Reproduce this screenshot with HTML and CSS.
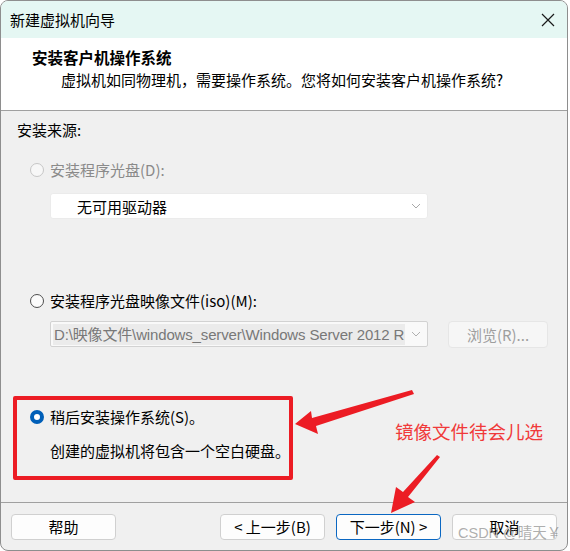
FILE: index.html
```html
<!DOCTYPE html>
<html lang="zh-CN">
<head>
<meta charset="utf-8">
<title>新建虚拟机向导</title>
<link rel="stylesheet" href="styles.css">
</head>
<body>
<div class="page">
  <div class="window">
    <div class="titlebar">
      <span class="title">新建虚拟机向导</span>
      <svg class="close" viewBox="0 0 14 14" width="14" height="14"><path d="M1 1 L13 13 M13 1 L1 13" stroke="#1a1a1a" stroke-width="1.2" fill="none"/></svg>
    </div>
    <div class="header">
      <div class="h-title">安装客户机操作系统</div>
      <div class="h-sub">虚拟机如同物理机，需要操作系统。您将如何安装客户机操作系统?</div>
    </div>
    <div class="content">
      <div class="label">安装来源:</div>
      <div class="radio-row r1"><span class="radio"></span><span>安装程序光盘(D):</span></div>
      <div class="select">
        <span>无可用驱动器</span>
        <svg class="chev" viewBox="0 0 10 6" width="10" height="6"><path d="M1 1 L5 5 L9 1" stroke="#a8a8a8" stroke-width="1" fill="none"/></svg>
      </div>
      <div class="radio-row r2"><span class="radio"></span><span>安装程序光盘映像文件(iso)(M):</span></div>
      <div class="iso-row">
        <div class="combo">
          <span class="combo-text">D:\映像文件\windows_server\Windows Server 2012 R</span>
          <svg class="chev" viewBox="0 0 10 6" width="10" height="6"><path d="M1 1 L5 5 L9 1" stroke="#b0b0b0" stroke-width="1" fill="none"/></svg>
        </div>
        <div class="btn browse">浏览(R)...</div>
      </div>
      <div class="later-row">
        <div class="redbox">
          <div class="radio-row"><span class="radio checked"></span><span>稍后安装操作系统(S)。</span></div>
          <div class="note">创建的虚拟机将包含一个空白硬盘。</div>
        </div>
        <div class="annot">镜像文件待会儿选</div>
      </div>
    </div>
    <div class="footer">
      <div class="btn">帮助</div>
      <div class="footer-right">
        <div class="btn">&lt; 上一步(B)</div>
        <div class="btn primary">下一步(N) &gt;</div>
        <div class="btn">取消</div>
      </div>
    </div>
  </div>
  <svg class="arrows" viewBox="0 0 570 551" width="570" height="551">
    <polygon points="295,424 311,411 312,418 412,390 414,394 316,426 318,434" fill="#ec1c24"/>
    <polygon points="391,513 396,487 403,492 437,455 440,457 408,497 415,502" fill="#ec1c24"/>
  </svg>
  <div class="watermark">CSDN @晴天￥</div>
</div>
</body>
</html>
```
FILE: styles.css
```css
* { box-sizing: border-box; }

body {
  margin: 0;
  background: #ffffff;
  font-family: "Noto Sans CJK SC", "Noto Sans", sans-serif;
  font-size: 15px;
  color: #000;
}

.page {
  position: relative;
  width: 570px;
  height: 551px;
}

.window {
  width: 568px;
  height: 551px;
  border: 1px solid #8e8e8e;
  border-radius: 8px;
  overflow: hidden;
  background: #f0f0f0;
  display: flex;
  flex-direction: column;
}

.titlebar {
  flex: none;
  height: 37px;
  background: #e5f7f3;
  display: flex;
  align-items: center;
  justify-content: space-between;
  padding: 0 12px 0 9px;
}

.title {
  font-size: 15px;
  line-height: 20px;
}

.close { display: block; }

.header {
  flex: none;
  height: 73px;
  background: #ffffff;
  border-bottom: 1px solid #a0a0a0;
  padding: 9px 0 0 31px;
}

.h-title {
  font-weight: bold;
  font-size: 15.5px;
  line-height: 20px;
}

.h-sub {
  margin-top: 3px;
  padding-left: 29px;
  line-height: 20px;
}

.content {
  flex: 1;
}

.label {
  margin: 9px 0 0 16px;
  line-height: 20px;
}

.radio-row {
  display: flex;
  align-items: center;
  gap: 6px;
  line-height: 20px;
  white-space: nowrap;
}

.content > .radio-row { padding-left: 29px; }

.radio {
  flex: none;
  width: 14px;
  height: 14px;
  border-radius: 50%;
  border: 1px solid #4e4e4e;
  background: #fbfbfb;
}

.radio.checked {
  border: 4px solid #005fb8;
  background: #ffffff;
}

.r1 {
  margin-top: 20px;
  color: #8a8a8a;
}

.r1 .radio {
  border-color: #c6c6c6;
  background: #f7f7f7;
}

.select {
  margin: 13px 0 0 49px;
  width: 378px;
  height: 26px;
  background: #ffffff;
  border: 1px solid #ebebeb;
  border-radius: 3px;
  display: flex;
  align-items: center;
  justify-content: space-between;
  padding: 0 6px 0 26px;
}

.chev { display: block; flex: none; }

.r2 { margin-top: 72px; }

.iso-row {
  display: flex;
  gap: 20px;
  margin: 10px 0 0 49px;
}

.combo {
  width: 378px;
  height: 26px;
  border: 1px solid #d2d2d2;
  border-radius: 2px;
  background: #f9f9f9;
  display: flex;
  align-items: center;
  justify-content: space-between;
  padding: 0 6px 0 2px;
}

.combo-text {
  font-family: "Liberation Sans", "Noto Sans CJK SC", sans-serif;
  background: #ebebeb;
  color: #787878;
  line-height: 21px;
  letter-spacing: -0.15px;
  white-space: nowrap;
  padding-left: 1px;
  padding-right: 1px;
}

.btn {
  width: 105px;
  height: 26px;
  border: 1px solid #d0d0d0;
  border-radius: 4px;
  background: #fdfdfd;
  display: flex;
  align-items: center;
  justify-content: center;
  line-height: 20px;
  white-space: nowrap;
}

.browse {
  width: 100px;
  height: 27px;
  color: #9e9e9e;
  background: #f6f6f6;
  border-color: #e6e6e6;
}

.primary {
  border-color: #0a67c2;
}

.later-row {
  display: flex;
  margin: 48px 0 0 12px;
}

.redbox {
  flex: none;
  width: 280px;
  height: 84px;
  border: 4px solid #ec1c24;
  border-radius: 2px;
  padding: 7px 0 0 13px;
}

.note {
  margin: 14px 0 0 20px;
  line-height: 20px;
  white-space: nowrap;
}

.annot {
  margin: 23px 0 0 102px;
  color: #f03a3a;
  font-size: 18.5px;
  line-height: 24px;
  white-space: nowrap;
}

.footer {
  flex: none;
  height: 48px;
  border-top: 1px solid #a0a0a0;
  display: flex;
  justify-content: space-between;
  padding: 11px 10px 0 10px;
}

.footer-right {
  display: flex;
  gap: 11px;
}

.arrows {
  position: absolute;
  left: 0;
  top: 0;
  pointer-events: none;
}

.watermark {
  position: absolute;
  left: 458px;
  top: 523px;
  font-family: "Liberation Sans", "Noto Sans CJK SC", sans-serif;
  font-size: 14.5px;
  line-height: 20px;
  color: rgba(120, 120, 120, 0.6);
  white-space: nowrap;
  pointer-events: none;
}
```
